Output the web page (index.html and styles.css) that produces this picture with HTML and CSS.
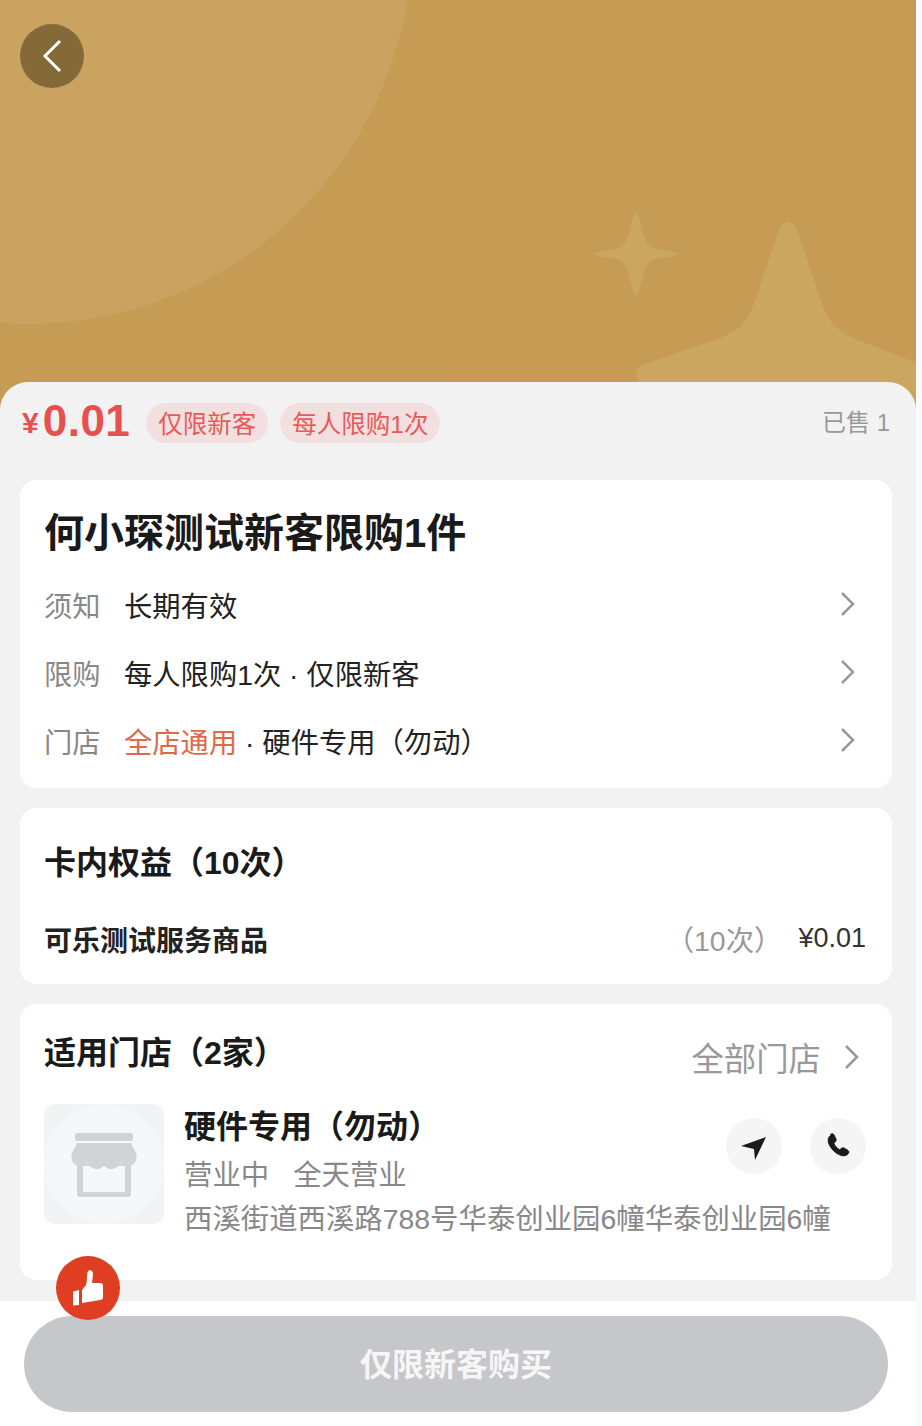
FILE: index.html
```html
<!DOCTYPE html>
<html lang="zh-CN">
<head>
<meta charset="utf-8">
<title>何小琛测试新客限购1件</title>
<link rel="stylesheet" href="styles.css">
</head>
<body>
<div class="page">
  <header class="hero">
    <svg class="hero-art" viewBox="0 0 916 410" aria-hidden="true">
      <circle cx="28" cy="-60" r="384" class="art-soft"/>
      <rect x="440" y="372" width="200" height="1" class="art-line"/>
      <path class="art" d="M636 212C638 212 639 216 640 221L644 236C646 243 649 247 656 249L673 252C677 253 678 253 678 254C678 255 677 255 673 256L656 259C649 261 646 265 644 272L640 287C639 292 638 296 636 296C634 296 633 292 632 287L628 272C626 265 623 261 616 259L599 256C595 255 594 255 594 254C594 253 595 253 599 252L616 249C623 247 626 243 628 236L632 221C633 216 634 212 636 212Z"/>
      <path class="art" d="M788 222C794 222 797 229 800 238L820 298C827 320 835 331 858 340L940 372L940 410L660 410C644 404 636 380 636 374C636 369 640 366 648 363L720 338C740 330 749 320 756 298L776 238C779 229 782 222 788 222Z"/>
    </svg>
    <button class="back" type="button" aria-label="返回">
      <svg viewBox="0 0 64 64"><path d="M40 17 25 32l15 15"/></svg>
    </button>
  </header>

  <main class="sheet">
    <section class="price-row">
      <div class="price"><span class="yen">¥</span><span class="amount">0.01</span></div>
      <span class="tag">仅限新客</span>
      <span class="tag">每人限购1次</span>
      <span class="sold">已售 1</span>
    </section>

    <section class="card card-main">
      <h1 class="main-title">何小琛测试新客限购<span class="num">1</span>件</h1>
      <div class="info-row">
        <span class="label">须知</span>
        <span class="value">长期有效</span>
        <svg class="chev" viewBox="0 0 16 26"><path d="M2 2l11 11L2 24"/></svg>
      </div>
      <div class="info-row">
        <span class="label">限购</span>
        <span class="value">每人限购1次 · 仅限新客</span>
        <svg class="chev" viewBox="0 0 16 26"><path d="M2 2l11 11L2 24"/></svg>
      </div>
      <div class="info-row">
        <span class="label">门店</span>
        <span class="value"><span class="accent">全店通用</span> · 硬件专用（勿动）</span>
        <svg class="chev" viewBox="0 0 16 26"><path d="M2 2l11 11L2 24"/></svg>
      </div>
    </section>

    <section class="card card-rights">
      <h2 class="section-title">卡内权益（<span class="num">10</span>次）</h2>
      <div class="right-item">
        <span class="right-name">可乐测试服务商品</span>
        <span class="right-count">（10次）</span>
        <span class="right-price">¥0.01</span>
      </div>
    </section>

    <section class="card card-stores">
      <div class="stores-head">
        <h2 class="section-title">适用门店（<span class="num">2</span>家）</h2>
        <span class="all-link">全部门店<svg class="chev" viewBox="0 0 16 26"><path d="M2 2l11 11L2 24"/></svg></span>
      </div>
      <div class="store">
        <div class="store-thumb">
          <svg viewBox="0 0 120 120" aria-hidden="true">
            <circle cx="60" cy="60" r="60" class="thumb-disc"/>
            <rect x="31" y="29" width="58" height="8" rx="2" class="thumb-glyph"/>
            <path class="thumb-glyph" fill-rule="evenodd" d="M33 60h54v30a3 3 0 0 1-3 3H36a3 3 0 0 1-3-3zM39 66v22h42V66z"/>
            <path class="thumb-disc" d="M39 62h42v8H39z"/>
            <path class="thumb-glyph" d="M33 39h54l5 10c2 6-1 13-8 13-3 0-6-1-8-3-2 4-5 6-9 6-3 0-5-1-7-4-2 3-4 4-7 4-4 0-7-2-9-6-2 2-5 3-8 3-7 0-10-7-8-13z"/>
          </svg>
        </div>
        <div class="store-body">
          <div class="store-top">
            <div class="store-lines">
              <div class="store-name">硬件专用（勿动）</div>
              <div class="store-status">营业中<span class="hours">全天营业</span></div>
            </div>
            <div class="store-actions">
              <span class="round-btn"><svg viewBox="0 0 56 56"><path d="M15 28 40 19 29 42 28 31z"/></svg></span>
              <span class="round-btn"><svg viewBox="0 0 56 56"><path class="phone" d="M20.5 16.500c1.500-1.200 3-.8 3.700.7l1.700 3.800c.5 1.100.2 2-.6 2.800l-1.500 1.400c1 2.600 3 5 5.900 6.500l1.700-1.300c.9-.7 1.900-.8 2.900-.2l3.400 2c1.400.9 1.500 2.300.4 3.500-1.700 2-4 2.600-6.600 1.800-6.500-2-11.600-7.400-13.100-13.400-.6-2.800.1-5 2.100-6.600z"/></svg></span>
            </div>
          </div>
          <div class="store-address">西溪街道西溪路788号华泰创业园6幢华泰创业园6幢</div>
        </div>
      </div>
    </section>
  </main>

  <footer class="footer">
    <span class="like">
      <svg viewBox="0 0 64 64" aria-hidden="true">
        <path d="M17 35.500 23 34v15l-6 .5z"/>
        <path d="M26 34l4-5c1.500-4 .5-9 1.500-13 1.500-3 5.500-2 5.500 2l-1 9h8q3 0 3 3v11q0 3-3 3l-18 3z"/>
      </svg>
    </span>
    <button class="buy" type="button"><span class="buy-text">仅限新客购买</span></button>
  </footer>
</div>
</body>
</html>
```

FILE: styles.css
```css
* { box-sizing: border-box; }

html, body {
  margin: 0;
  padding: 0;
  background: #f9fafb;
}

body {
  font-family: "Liberation Sans", "Noto Sans CJK SC", sans-serif;
  color: #222;
}

.page {
  position: relative;
  width: 916px;
  height: 1426px;
  overflow: hidden;
  display: flex;
  flex-direction: column;
}

.hero {
  position: relative;
  height: 410px;
  flex: none;
  background: #c69b53;
}

.hero-art {
  position: absolute;
  inset: 0;
  width: 916px;
  height: 410px;
}

.art { fill: #cba661; }
.art-soft { fill: #c9a35f; }
.art-line { fill: #ca984f; }

.back {
  position: absolute;
  left: 20px;
  top: 24px;
  width: 64px;
  height: 64px;
  padding: 0;
  border: 0;
  border-radius: 50%;
  background: #856a39;
}

.back svg { display: block; width: 64px; height: 64px; }
.back path { fill: none; stroke: #fff; stroke-width: 3; }

.sheet {
  position: relative;
  flex: none;
  height: 919px;
  margin-top: -28px;
  padding: 0 24px 0 20px;
  background: #f2f2f3;
  border-radius: 28px 28px 0 0;
}

.price-row {
  display: flex;
  align-items: center;
  height: 98px;
  padding: 0 2px 16px 0;
}

.price {
  color: #e8504f;
  font-weight: 700;
  line-height: 44px;
  white-space: nowrap;
  margin: 6px 16px 0 0;
}

.yen { font-size: 30px; margin: 0 4px 0 2px; vertical-align: 3px; }
.amount { font-size: 44px; letter-spacing: .5px; }

.tag {
  height: 40px;
  line-height: 44px;
  padding: 0 12px;
  margin-right: 12px;
  border-radius: 20px;
  background: #f2dfdf;
  color: #e85a58;
  font-size: 24.500px;
}

.sold {
  margin-left: auto;
  margin-bottom: 6px;
  color: #999;
  font-size: 24px;
}

.card {
  background: #fff;
  border-radius: 16px;
}

.num { font-weight: 700; }

.card-main {
  height: 308px;
  padding: 25px 0 12px 24px;
}

.main-title {
  margin: 0 0 11px;
  font-size: 40px;
  line-height: 56px;
  font-weight: 700;
  color: #1a1a1a;
}

.info-row {
  display: flex;
  align-items: center;
  height: 68px;
  font-size: 28.300px;
  padding: 0 36px 4px 0;
}

.label { width: 80px; flex: none; color: #888; }
.value { flex: 1; color: #222; }
.accent { color: #e0694a; }

.chev {
  width: 16px;
  height: 26px;
  flex: none;
  margin-top: 0;
}

.chev path {
  fill: none;
  stroke: #999;
  stroke-width: 2.500;
}

.card-rights {
  height: 176px;
  margin-top: 20px;
  padding: 25px 26px 0 24px;
}

.section-title {
  margin: 0;
  font-size: 32px;
  line-height: 60px;
  font-weight: 700;
  color: #1a1a1a;
}

.right-item {
  display: flex;
  align-items: center;
  height: 44px;
  margin-top: 24px;
  font-size: 28.400px;
}

.right-name { flex: 1; font-size: 28px; font-weight: 700; color: #222; }
.right-count { color: #999; margin-right: 16px; padding-bottom: 2px; }
.right-price { color: #333; font-size: 27px; padding-bottom: 2px; }

.card-stores {
  height: 276px;
  margin-top: 20px;
  padding: 25px 26px 0 24px;
}

.stores-head {
  display: flex;
  justify-content: space-between;
  align-items: flex-start;
  height: 53px;
}

.stores-head .section-title { line-height: 48px; }

.all-link {
  display: flex;
  align-items: center;
  gap: 23px;
  height: 48px;
  margin-top: 3px;
  padding-right: 6px;
  font-size: 32.400px;
  color: #999;
}

.all-link .chev { margin-top: 2px; }

.store {
  display: flex;
  gap: 20px;
  margin-top: 22px;
}

.store-thumb {
  flex: none;
  width: 120px;
  height: 120px;
  border-radius: 10px;
  overflow: hidden;
  background: #f2f3f5;
}

.store-thumb svg { display: block; width: 120px; height: 120px; }
.thumb-disc { fill: #f6f7f8; }
.thumb-glyph { fill: #d2d3d6; }

.store-body { flex: 1; min-width: 0; }

.store-top {
  display: flex;
  justify-content: space-between;
}

.store-name {
  font-size: 32px;
  line-height: 46px;
  font-weight: 700;
  color: #1a1a1a;
}

.store-status {
  font-size: 28.400px;
  line-height: 50px;
  color: #888;
}

.hours { margin-left: 24px; }

.store-address {
  font-size: 28.400px;
  line-height: 38px;
  color: #888;
  white-space: nowrap;
}

.store-actions {
  display: flex;
  gap: 28px;
  margin-top: 14px;
}

.round-btn {
  width: 56px;
  height: 56px;
  border-radius: 50%;
  background: #f5f5f5;
}

.round-btn svg { display: block; width: 56px; height: 56px; }
.round-btn path { fill: #1a1a1a; }
.round-btn .phone { stroke: #1a1a1a; stroke-width: 1; stroke-linejoin: round; }

.footer {
  position: relative;
  flex: 1;
  padding: 15px 28px 0 24px;
  background: #fff;
}

.buy {
  display: block;
  width: 864px;
  height: 96px;
  padding: 0 0 4px;
  border: 0;
  border-radius: 48px;
  background: #c6c7ca;
  color: rgba(255, 255, 255, .85);
  font: 700 32px "Liberation Sans", "Noto Sans CJK SC", sans-serif;
}

.like {
  position: absolute;
  left: 56px;
  top: -45px;
  width: 64px;
  height: 64px;
  border-radius: 50%;
  background: #e03e22;
}

.like svg { display: block; width: 64px; height: 64px; }
.like path { fill: #fff; }
```
